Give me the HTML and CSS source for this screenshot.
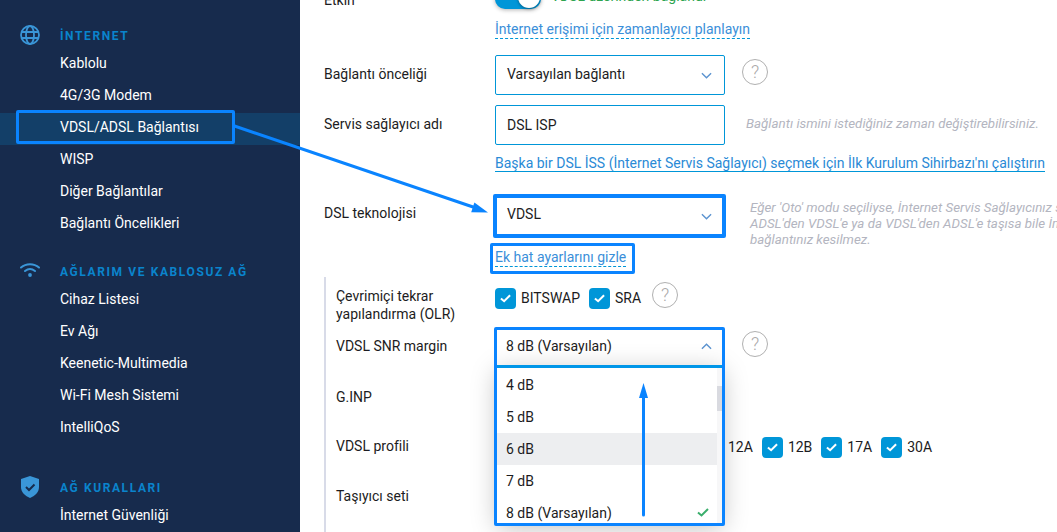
FILE: index.html
```html
<!DOCTYPE html>
<html lang="tr">
<head>
<meta charset="utf-8">
<title>VDSL/ADSL Bağlantısı</title>
<link rel="stylesheet" href="styles.css">
</head>
<body>
<div class="app">
  <nav class="sidebar">
    <section class="nav-group">
      <h2 class="nav-title">
        <svg class="nav-icon globe" viewBox="0 0 20 20"><g fill="none" stroke="#3a96d8" stroke-width="1.8"><circle cx="10" cy="10" r="9"/><ellipse cx="10" cy="10" rx="4" ry="9"/><path d="M1.5 7h17M1.5 13h17"/></g></svg>
        <span>İNTERNET</span>
      </h2>
      <a class="nav-item">Kablolu</a>
      <a class="nav-item">4G/3G Modem</a>
      <a class="nav-item active">VDSL/ADSL Bağlantısı</a>
      <a class="nav-item">WISP</a>
      <a class="nav-item">Diğer Bağlantılar</a>
      <a class="nav-item">Bağlantı Öncelikleri</a>
    </section>
    <section class="nav-group nav-group-wide">
      <h2 class="nav-title">
        <svg class="nav-icon wifi" viewBox="0 0 20 14"><g fill="none" stroke="#3a96d8" stroke-width="2" stroke-linecap="round"><path d="M1 4.500c5-4.500 13-4.500 18 0"/><path d="M5 8c3-2.500 7-2.500 10 0"/></g><circle cx="10" cy="12" r="1.900" fill="#3a96d8"/></svg>
        <span>AĞLARIM VE KABLOSUZ AĞ</span>
      </h2>
      <a class="nav-item">Cihaz Listesi</a>
      <a class="nav-item">Ev Ağı</a>
      <a class="nav-item">Keenetic-Multimedia</a>
      <a class="nav-item">Wi-Fi Mesh Sistemi</a>
      <a class="nav-item">IntelliQoS</a>
    </section>
    <section class="nav-group">
      <h2 class="nav-title">
        <svg class="nav-icon shield" viewBox="0 0 18 22"><path d="M9 0l9 3v8c0 5-3.500 8.500-9 11-5.500-2.500-9-6-9-11V3z" fill="#3a96d8"/><path d="M5 11l3 3 5.500-5.500" fill="none" stroke="#172b4d" stroke-width="2"/></svg>
        <span>AĞ KURALLARI</span>
      </h2>
      <a class="nav-item">İnternet Güvenliği</a>
    </section>
  </nav>

  <main class="content">
    <div class="row row-enable">
      <label class="label">Etkin</label>
      <div class="toggle-wrap">
        <span class="toggle"><span class="knob"></span></span>
        <span class="status">VDSL üzerinden bağlandı</span>
      </div>
    </div>
    <a class="link dashed schedule">İnternet erişimi için zamanlayıcı planlayın</a>

    <div class="row row-priority">
      <label class="label">Bağlantı önceliği</label>
      <div class="select raised">Varsayılan bağlantı<svg class="chev" viewBox="0 0 12 7"><path d="M1 1l5 5 5-5"/></svg></div>
      <span class="help">?</span>
    </div>

    <div class="row row-name">
      <label class="label">Servis sağlayıcı adı</label>
      <div class="select">DSL ISP</div>
      <span class="hint hint-name">Bağlantı ismini istediğiniz zaman değiştirebilirsiniz.</span>
    </div>
    <a class="link solid wizard">Başka bir DSL İSS (İnternet Servis Sağlayıcı) seçmek için İlk Kurulum Sihirbazı'nı çalıştırın</a>

    <div class="row row-tech">
      <label class="label">DSL teknolojisi</label>
      <div class="select tall">VDSL<svg class="chev" viewBox="0 0 12 7"><path d="M1 1l5 5 5-5"/></svg></div>
      <p class="hint hint-tech">Eğer 'Oto' modu seçiliyse, İnternet Servis Sağlayıcınız sizi ADSL'den VDSL'e ya da VDSL'den ADSL'e taşısa bile İnternet bağlantınız kesilmez.</p>
    </div>
    <a class="link dashed hide-link">Ek hat ayarlarını gizle</a>

    <div class="advanced">
      <div class="row row-olr">
        <label class="label sub">Çevrimiçi tekrar yapılandırma (OLR)</label>
        <div class="checks">
          <span class="check"><i class="box"><svg viewBox="0 0 12 9"><path d="M1 4.500l3.500 3L11 1"/></svg></i>BITSWAP</span>
          <span class="check"><i class="box"><svg viewBox="0 0 12 9"><path d="M1 4.500l3.500 3L11 1"/></svg></i>SRA</span>
        </div>
        <span class="help">?</span>
      </div>
      <div class="row row-snr">
        <label class="label sub">VDSL SNR margin</label>
        <div class="select open">8 dB (Varsayılan)<svg class="chev" viewBox="0 0 12 7"><path d="M1 6l5-5 5 5"/></svg></div>
        <span class="help">?</span>
      </div>
      <div class="row row-ginp"><label class="label sub">G.INP</label></div>
      <div class="row row-profile">
        <label class="label sub">VDSL profili</label>
        <div class="checks profiles">
          <span class="check"><i class="box"><svg viewBox="0 0 12 9"><path d="M1 4.500l3.500 3L11 1"/></svg></i>12A</span>
          <span class="check"><i class="box"><svg viewBox="0 0 12 9"><path d="M1 4.500l3.500 3L11 1"/></svg></i>12B</span>
          <span class="check"><i class="box"><svg viewBox="0 0 12 9"><path d="M1 4.500l3.500 3L11 1"/></svg></i>17A</span>
          <span class="check"><i class="box"><svg viewBox="0 0 12 9"><path d="M1 4.500l3.500 3L11 1"/></svg></i>30A</span>
        </div>
      </div>
      <div class="row row-carrier"><label class="label sub">Taşıyıcı seti</label></div>
    </div>
  </main>

  <div class="dropdown">
    <ul class="options">
      <li>4 dB</li>
      <li>5 dB</li>
      <li class="hover">6 dB</li>
      <li>7 dB</li>
      <li>8 dB (Varsayılan)<svg class="tick" viewBox="0 0 12 9"><path d="M1 4.500l3.500 3L11 1"/></svg></li>
    </ul>
    <div class="track"><span class="thumb"></span></div>
  </div>

  <span class="mark mark-nav"></span>
  <span class="mark mark-tech"></span>
  <span class="mark mark-link"></span>
  <span class="mark mark-snr"></span>

  <svg class="arrows" viewBox="0 0 1057 532">
    <path d="M233 125.500L476 208" stroke="#0a84ff" stroke-width="3" fill="none"/>
    <path d="M488 212.500L471.200 212.200 474.400 202.600z" fill="#0a84ff"/>
    <path d="M643.500 515V396" stroke="#0a84ff" stroke-width="3" stroke-linecap="round" fill="none"/>
    <path d="M643.500 383l4.500 15h-9z" fill="#0a84ff"/>
  </svg>
</div>
</body>
</html>
```

FILE: styles.css
```css
* { box-sizing: border-box; }
html, body { margin: 0; height: 100%; }
body { font-family: Roboto, "Noto Sans", sans-serif; font-size: 14px; color: #1c1c22; background: #fff; overflow: hidden; }
.app { position: relative; display: flex; width: 1057px; height: 532px; overflow: hidden; }

.sidebar { width: 300px; flex: none; background: #172b4d; padding-top: 24px; }
.nav-group { margin-bottom: 19px; }
.nav-group-wide { margin-bottom: 31px; }
.nav-title { position: relative; margin: 0 0 2px; height: 23px; padding-left: 60px; display: flex; align-items: center; font-size: 12px; font-weight: 700; letter-spacing: 1.6px; color: #0a84cc; }
.nav-icon { position: absolute; left: 20px; }
.globe { top: 1px; width: 20px; height: 20px; }
.wifi { top: 3px; width: 20px; height: 14px; }
.shield { left: 21px; top: 0; width: 18px; height: 22px; }
.nav-item { display: flex; align-items: center; height: 32px; padding: 0 0 4px 60px; color: #fff; font-size: 14px; }
.nav-item.active { background: #133f68; }

.content { flex: 1; min-width: 0; padding: 0 0 0 24px; margin-top: -10px; }
.row { display: flex; align-items: flex-start; }
.label { width: 171px; flex: none; line-height: 20px; }
.label.sub { width: 159px; }
.row-enable { height: 20px; }
.toggle-wrap { display: flex; align-items: flex-start; }
.toggle { position: relative; display: block; width: 46px; height: 20px; margin-top: -1px; border-radius: 10px; background: #0096d8; box-shadow: 0 1px 4px rgba(0,0,0,.3); }
.knob { position: absolute; right: 1px; top: -3px; width: 22px; height: 22px; border-radius: 50%; background: #fff; box-shadow: 0 1px 3px rgba(0,0,0,.4); }
.status { margin: -3px 0 0 10px; color: #2da44e; line-height: 18px; }

.link { display: block; width: max-content; margin-left: 171px; color: #3b8fd9; line-height: 18px; }
.link.dashed { border-bottom: 1px dashed #0096d8; }
.link.solid { border-bottom: 1px solid #0096d8; color: #2a8ad6; line-height: 16px; }
.schedule { margin-top: 10px; }

.select { position: relative; width: 230px; height: 40px; flex: none; padding: 0 11px; display: flex; align-items: center; border: 1px solid #0096d8; border-radius: 2px; background: #fff; font-size: 14px; }
.select.raised { padding-bottom: 3px; }
.select.tall { height: 41px; padding-bottom: 4px; }
.select.open { height: 34px; padding-left: 10px; border-color: transparent; }
.chev { position: absolute; right: 12px; top: 50%; width: 11px; height: 7px; margin-top: -3px; fill: none; stroke: #5b93d0; stroke-width: 1.500; }
.help { flex: none; width: 26px; height: 26px; margin-left: 17px; border: 1px solid #b0b0b0; border-radius: 50%; color: #a8a8a8; font-size: 18px; font-weight: 300; line-height: 24px; text-align: center; }
.hint { color: #b3b5c0; font-style: italic; font-size: 13.33px; line-height: 16px; }
.hint-name { margin: 11px 0 0 21px; white-space: nowrap; }
.hint-tech { margin: 5px 0 0 25px; width: 365px; flex: none; }

.row-priority { margin-top: 16px; }
.row-priority .label { padding-top: 9px; }
.row-priority .help { margin-top: 4px; }
.row-name { margin-top: 10px; }
.row-name .label { padding-top: 9px; }
.wizard { margin-top: 10px; }
.row-tech { margin-top: 23px; height: 41px; }
.row-tech .label { padding-top: 8px; }
.hide-link { margin-top: 12px; }

.advanced { margin-top: 10px; border-left: 2px solid #d8dbe8; padding-left: 10px; height: 400px; }
.row-olr { padding-top: 10px; height: 52px; }
.row-olr .label { line-height: 18px; }
.checks { display: flex; gap: 9px; }
.check { display: flex; align-items: center; gap: 5px; height: 22px; }
.box { display: flex; align-items: center; justify-content: center; width: 21px; height: 21px; border-radius: 4px; background: #0096d8; }
.box svg { width: 11px; height: 9px; fill: none; stroke: #fff; stroke-width: 2.200; }
.row-olr .help { margin: -5px 0 0 11px; }
.row-snr { height: 44px; }
.row-snr .label { padding-top: 7px; }
.row-snr .help { margin-top: 2px; }
.row-ginp { height: 50px; padding-top: 14px; }
.row-profile { height: 50px; padding-top: 13px; }
.profiles { margin-left: 207px; }
.row-carrier { padding-top: 13px; }

.dropdown { position: absolute; left: 497px; top: 367px; width: 225px; height: 157px; display: flex; background: #fff; overflow: hidden; box-shadow: 0 4px 24px rgba(0,0,0,.25); }
.options { flex: 1; list-style: none; margin: 2px 0 0; padding: 0; }
.options li { position: relative; height: 32px; padding-left: 9px; display: flex; align-items: center; }
.options li.hover { background: #edeef0; }
.tick { position: absolute; right: 8px; top: 11px; width: 12px; height: 9px; fill: none; stroke: #3aae6c; stroke-width: 2; }
.track { width: 5px; flex: none; padding-top: 19px; background: #f7f7f8; }
.thumb { display: block; height: 25px; background: #d9dae0; }

.mark { position: absolute; border: 3px solid #0a84ff; border-radius: 2px; pointer-events: none; }
.mark-nav { left: 16px; top: 110px; width: 219px; height: 34px; }
.mark-tech { left: 493px; top: 194px; width: 233px; height: 44px; border-width: 4px; }
.mark-link { left: 490px; top: 243px; width: 145px; height: 31px; }
.mark-snr { left: 494px; top: 327px; width: 231px; height: 199px; }
.mark-snr::after { content: ""; position: absolute; left: 0; right: 0; top: 35px; height: 3px; background: #0096e8; }
.arrows { position: absolute; left: 0; top: 0; width: 1057px; height: 532px; pointer-events: none; }
```
